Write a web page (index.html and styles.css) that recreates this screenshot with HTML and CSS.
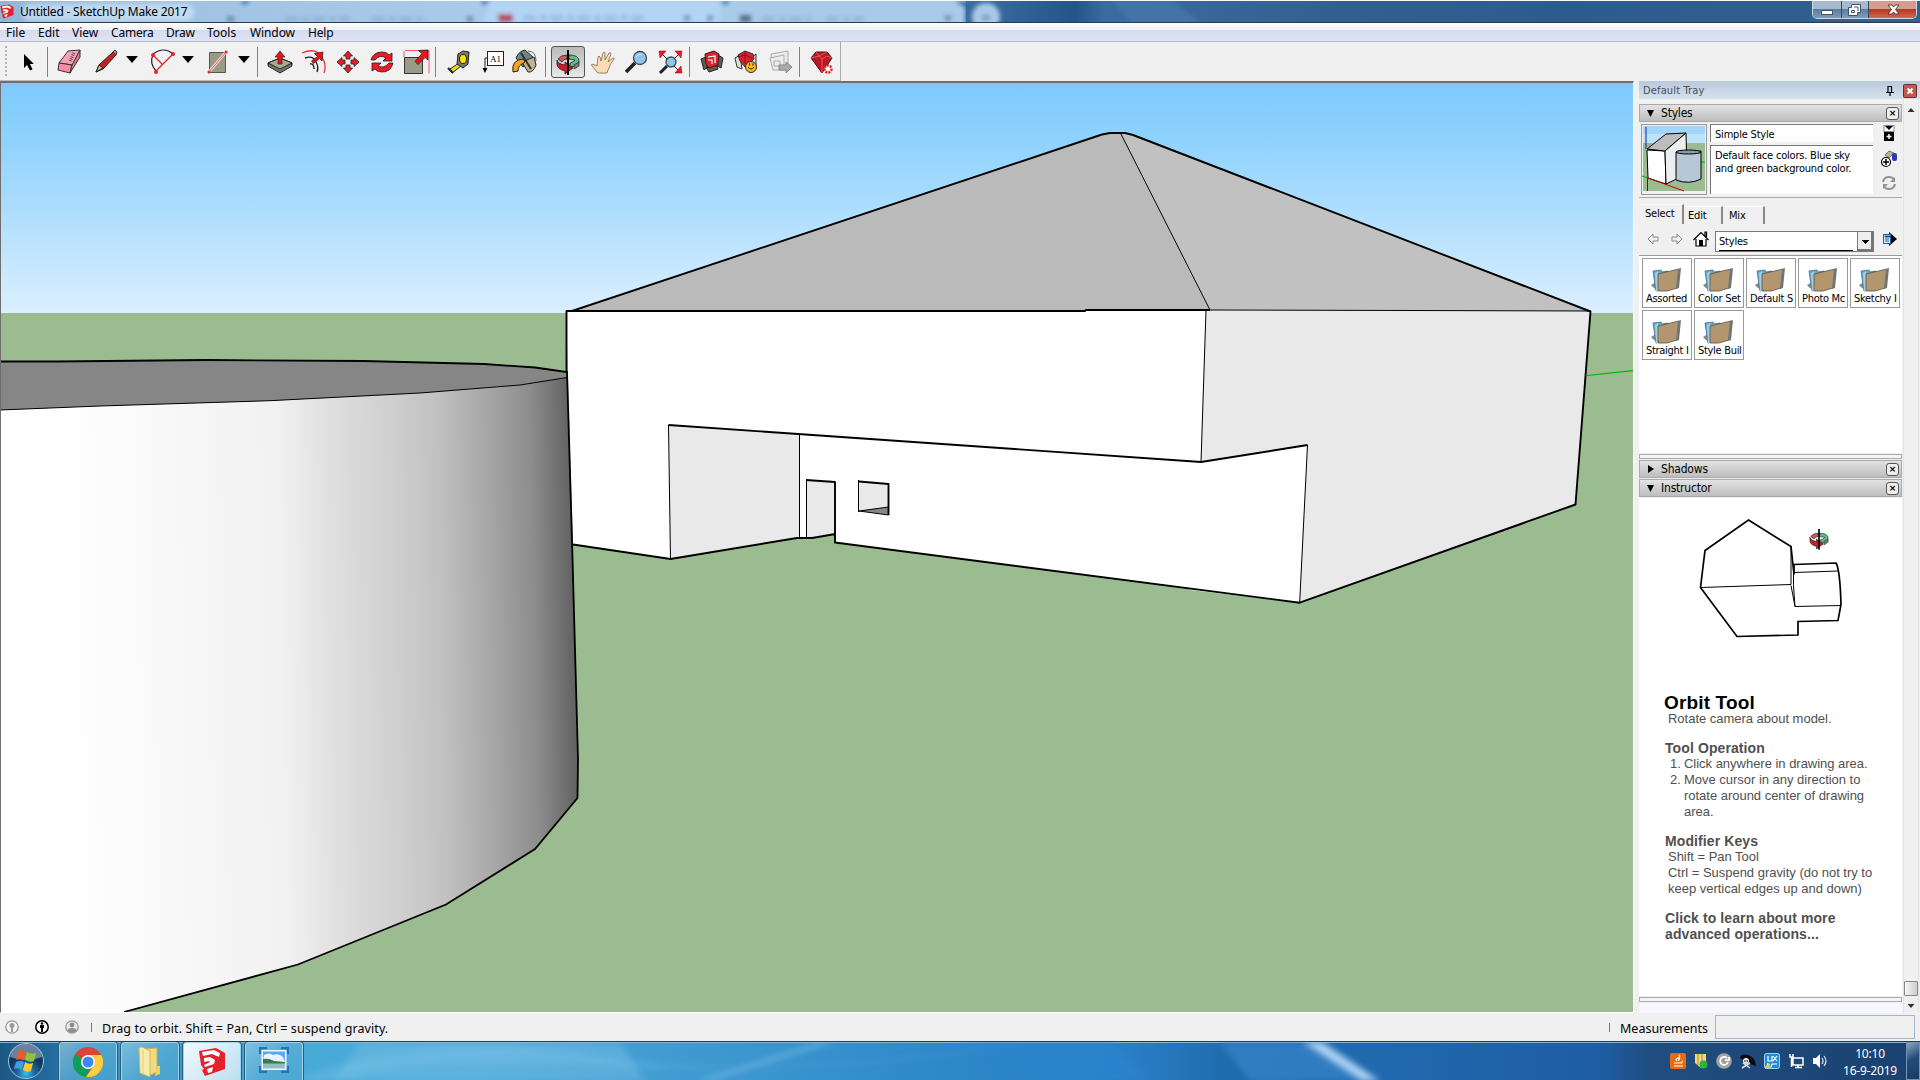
FILE: index.html
```html
<!DOCTYPE html>
<html lang="en">
<head>
<meta charset="utf-8">
<title>Untitled - SketchUp Make 2017</title>
<link rel="stylesheet" href="styles.css">
</head>
<body>
<svg class="defs" width="0" height="0">
  <defs>
    <symbol id="orbit" viewBox="0 0 34 34">
      <path d="M7 14q3-4 9-4v4q-4 0-5 3z" fill="#d2585c" stroke="#222" stroke-width=".8"/>
      <path d="M18 10q10 0 10 6 0 5-9 6v-4q4-1 5-3l-6-1z" fill="#5fbd86" stroke="#222" stroke-width=".8"/>
      <path d="M6 15q1 4 8 5v-3l8 6-8 6v-3q-8-2-8-7z" fill="#c81e28" stroke="#222" stroke-width=".8"/>
      <path d="M23 20l5-3v4l-5 3z" fill="#7b8178" stroke="#222" stroke-width=".7"/>
      <path d="M17 5v25" stroke="#000" stroke-width="2"/>
    </symbol>
    <symbol id="folder" viewBox="0 0 48 26">
      <path d="M8 19l8-5v11q-6-3-8-6z" fill="#888"/>
      <path d="M10 5l8-1 1 2 6-1v6L14 25 13 25z" fill="#68aacb" stroke="#39718e" stroke-width=".8"/>
      <path d="M12 7l3-2 1 20h-3z" fill="#9dd0e8"/>
      <path d="M15 8l21-5-2 19-10 3H15z" fill="#b4966e" stroke="#55504a" stroke-width=".8"/>
      <path d="M35 3l3-1-2 20-3 1z" fill="#6b7777"/>
    </symbol>
    <symbol id="logo" viewBox="0 0 28 28">
      <path d="M1 3l17-3 9 5v16L7 28 4 22l2-1-3-4z" fill="#e5212a"/>
      <path d="M4 4l12-2 6 3-1 4-7-3-9 2zM6 10l6-1 5 3-1 4-9 3-1-2 6-3-1-1-5 1zM9 21l6-2-1 5-4 1z" fill="#fff"/>
    </symbol>
  </defs>
</svg>

<header class="titlebar">
  <div class="tabs-behind">
    <svg width="1920" height="22" viewBox="0 0 1920 22">
      <defs><linearGradient id="tb"><stop offset="0" stop-color="#8fb5d9"/><stop offset=".1" stop-color="#9fc1e1"/><stop offset=".5" stop-color="#a9cbea"/></linearGradient>
      <linearGradient id="sky2"><stop offset="0" stop-color="#4274a6"/><stop offset=".13" stop-color="#245589"/><stop offset=".16" stop-color="#3b6c9f"/><stop offset=".4" stop-color="#335f90"/><stop offset=".62" stop-color="#2c5c8e"/><stop offset="1" stop-color="#315f8f"/></linearGradient>
      <filter id="bl" x="-10%" y="-50%" width="120%" height="200%"><feGaussianBlur stdDeviation="2"/></filter></defs>
      <rect x="950" width="970" height="22" fill="url(#sky2)"/>
      <path d="M1112 0h60l30 22h-70z" fill="#4b7bad" opacity=".6" filter="url(#bl)"/>
      <rect width="966" height="22" fill="url(#tb)"/>
      <path d="M955 0h20v22h-10V6z" fill="#3b6b9e" filter="url(#bl)"/>
      <g filter="url(#bl)">
        <path d="M490 0h230v22H483z" fill="#b2d4f5"/>
        <path d="M240 0h10l-5 4zM480 0h10l-5 4zM720 0h10l-5 4z" fill="#2d5c91"/>
        <circle cx="986" cy="16" r="14" fill="#a8c9e8"/><rect x="982" y="14" width="8" height="5" fill="#7b97b3"/>
        <rect x="498" y="13" width="15" height="8" fill="#b2485e"/>
        <rect x="740" y="14" width="11" height="7" fill="#5a7088"/>
        <path d="M285 18h65M372 18h55M523 17h125M762 18h50M826 18h38" stroke="#6688aa" stroke-width="5" stroke-dasharray="13 4 7 3" opacity=".3"/>
        <path d="M227 18h7M467 18h6M684 17h6M707 17h6M945 17h6" stroke="#3e5874" stroke-width="5" opacity=".6"/>
      </g>
      <rect x="22" y="3" width="172" height="17" rx="8" fill="#d9eaf8" opacity=".6" filter="url(#bl)"/>
    </svg>
  </div>
  <svg class="app-logo" width="14" height="15"><use href="#logo" width="14" height="15"/></svg>
  <span class="app-title">Untitled - SketchUp Make 2017</span>
  <div class="win-buttons">
    <div class="wb"><svg width="28" height="18"><rect x="8.500" y="9.500" width="11" height="4" fill="#fff" stroke="#44546a"/></svg></div>
    <div class="wb"><svg width="26" height="18"><path d="M9.500 3.500h9v8h-3v3h-9v-8h3z" fill="#fff" stroke="#44546a"/><path d="M9.500 9.500h3v2h-3zM12 6h4v4" fill="none" stroke="#44546a"/></svg></div>
    <div class="wb wb-close"><svg width="47" height="18"><path d="M19 4h4l1.500 2L26 4h4l-3.500 4.500L30 13h-4l-1.500-2-1.500 2h-4l3.500-4.500z" fill="#fff" stroke="#533" stroke-width=".9"/></svg></div>
  </div>
</header>

<nav class="menubar"><span class="m1">File</span><span class="m2">Edit</span><span class="m3">View</span><span class="m4">Camera</span><span class="m5">Draw</span><span class="m6">Tools</span><span class="m7">Window</span><span class="m8">Help</span></nav>

<div class="toolbar">
  <div class="tools">
    <i class="grip"></i>
    <svg class="ic" viewBox="0 0 34 34"><path d="M13 9v14l3-3 3 5.500 2.500-1.200L19 19h4z" fill="#000"/></svg>
    <i class="sep"></i>
    <svg class="ic g3" viewBox="0 0 34 34"><path d="M16 6l12-1-7 15-14-2z" fill="#f3a3b7" stroke="#333"/><path d="M7 18l13 2-2 8-12-3z" fill="#fb8ca5" stroke="#333"/><path d="M28 5v7l-10 16 2-8z" fill="#d77990" stroke="#333"/><path d="M22 8l-4 8" stroke="#6d4650" stroke-width="3" stroke-dasharray="1 1"/></svg>
    <svg class="ic g3" viewBox="0 0 34 34"><path d="M7 27l3-7L24 7l3 3-13 14z" fill="#c91f1f" stroke="#222"/><path d="M7 27l3-7 4 3z" fill="#d2bd86" stroke="#222"/><path d="M24 7l2-2 2 2-1 3z" fill="#c98c8c" stroke="#333"/></svg>
    <i class="dd"></i>
    <svg class="ic g4" viewBox="0 0 34 34"><path d="M8 9Q19 1 28 9M8 10Q4 18 11 26" fill="none" stroke="#222" stroke-width="1.200"/><path d="M28 9L11 26M8 10l9 9" stroke="#e31b23" stroke-width="1.200"/><circle cx="8" cy="10" r="2" fill="#f01c24"/><circle cx="28" cy="9" r="2" fill="#f01c24"/><circle cx="11" cy="27" r="2" fill="#f01c24"/></svg>
    <i class="dd"></i>
    <svg class="ic g4" viewBox="0 0 34 34"><path d="M8.500 7.500h16v20h-16z" fill="#9a9a86" stroke="#55554c"/><path d="M8 27L25 7" stroke="#fff" stroke-width="2.500"/><path d="M8 27L25 7" stroke="#ed3237"/><circle cx="8" cy="27" r="1.500" fill="#f01c24"/><circle cx="25" cy="7" r="1.500" fill="#f01c24"/></svg>
    <i class="dd"></i>
    <i class="sep s2"></i>
    <svg class="ic g4" viewBox="0 0 34 34"><path d="M5 18l12-5 12 5v3l-12 7-12-7z" fill="#77776a" stroke="#222"/><path d="M5 18l12-5 12 5-12 6z" fill="#a9a994" stroke="#222"/><path d="M15 19v-7h-3l5-6 5 6h-3v7z" fill="#e8151c" stroke="#222" stroke-width=".7"/></svg>
    <svg class="ic" viewBox="0 0 34 34"><path d="M5 8q14-6 20 4 5 8 2 16" fill="none" stroke="#e93238" stroke-width="1.300"/><path d="M8 13q8-3 11 4 3 5 1 10M13 19q4-1 4 5" fill="none" stroke="#222" stroke-width="1.400"/><path d="M26 7l-1 9-2.500-2.500-6 5-2-2.500 6-4.500-3-3z" fill="#e8151c" stroke="#222" stroke-width=".7"/></svg>
    <svg class="ic" viewBox="0 0 34 34"><path d="M17 6l4.500 5H19v3h-4v-3h-2.500zM17 28l4.500-5H19v-3h-4v3h-2.500zM6 17l5-4.500V15h3v4h-3v2.500zM28 17l-5-4.500V15h-3v4h3v2.500z" fill="#ed1c24" stroke="#222" stroke-width=".8"/></svg>
    <svg class="ic" viewBox="0 0 34 34"><path d="M6 15q2-8 11-8 5 0 7 3l3-2v8h-9l3-3q-6-4-11 2z" fill="#ed1c24" stroke="#222" stroke-width=".8"/><path d="M28 18q-2 9-11 9-5 0-7-3l-3 2v-8h9l-3 3q6 3 11-3z" fill="#ed1c24" stroke="#222" stroke-width=".8"/></svg>
    <svg class="ic" viewBox="0 0 34 34"><path d="M6 5.500h24v23" fill="none" stroke="#f25a60"/><path d="M5.500 12.500h18v16h-18z" fill="#9a9a86" stroke="#333"/><path d="M5 12V6" stroke="#f25a60"/><path d="M29 5v10l-3-2.500-7 7-3-3 7-8-3.500-3z" fill="#e8151c" stroke="#222" stroke-width=".8"/></svg>
    <i class="sep"></i>
    <svg class="ic g5" viewBox="0 0 34 34"><path d="M8 24l9-6 2 3-9 7z" fill="#e9d821" stroke="#222"/><path d="M6 23l5 5" stroke="#222" stroke-width="2"/><path d="M16 9l5-3 6 1-1 12-5 4-6-4z" fill="#77776a" stroke="#222"/><ellipse cx="21" cy="14" rx="3.500" ry="4.500" fill="#f7e600" stroke="#222"/></svg>
    <svg class="ic" viewBox="0 0 34 34"><rect x="11.500" y="6.500" width="16" height="14" fill="#fff" stroke="#222"/><path d="M11 13H9v11" fill="none" stroke="#222"/><path d="M6.500 23h5L9 28z"/><text class="a1" x="14" y="17">A1</text></svg>
    <svg class="ic gm" viewBox="0 0 34 34"><path d="M8 13q3-7 9-8l9 8-11 9z" fill="#6f8788" stroke="#222"/><path d="M14 17l12-5 2 8q-3 8-8 7z" fill="#beb58f" stroke="#222"/><path d="M13 8l10 16" stroke="#333" stroke-width="2"/><path d="M5 27q-2-12 10-13 3 2 1 4-6 2-6 8z" fill="#f5a51b" stroke="#222"/><path d="M20 6q8 0 8 10" fill="none" stroke="#666"/></svg>
    <i class="sep s3"></i>
    <span class="pressed"><svg class="ic"><use href="#orbit"/></svg></span>
    <svg class="ic" viewBox="0 0 34 34"><path d="M13 28L7 21q-2-3 3-1l2 1 1-9q1-2 2 0l1 4 2-8q2-2 2 0v7l4-7q2-1 2 1l-3 8 5-4q2 0 1 1-4 5-6 11l-1 3z" fill="#fbdcb6" stroke="#7a6a50" stroke-width=".8"/></svg>
    <svg class="ic" viewBox="0 0 34 34"><path d="M7 27l9-9" stroke="#222" stroke-width="3.500"/><circle cx="21" cy="13" r="6.500" fill="#8ec5e8" stroke="#3c4a55" stroke-width="1.300"/><path d="M17 12q2-4 6-3" stroke="#d8efff" fill="none"/></svg>
    <svg class="ic" viewBox="0 0 34 34"><path d="M7 28l7-7" stroke="#222" stroke-width="3"/><path d="M9 9l16 16M26 9l-9 9" stroke="#222"/><circle cx="18" cy="17" r="5" fill="#8ec5e8" stroke="#3c4a55" stroke-width="1.300"/><path d="M6 6h7l-6 7zM29 6h-7l6 7zM29 28h-7l6-7z" fill="#ed1c24" stroke="#801" stroke-width=".5"/></svg>
    <i class="sep s0"></i>
    <svg class="ic g4" viewBox="0 0 34 34"><path d="M6 14l5-2 2 10-4 3zM28 13l-5-3-2 10 5 3zM11 22l11-2 1 4-9 3z" fill="#655d54" stroke="#222"/><path d="M10 9l9-3 5 3-1 11-9 3-3-4z" fill="#e0202a" stroke="#222"/><path d="M13 12l7-1v7M13 15h4v4" fill="none" stroke="#fff" stroke-width="1.200"/></svg>
    <svg class="ic" viewBox="0 0 34 34"><path d="M6 13l5-3 2 14-5-2zM27 9l-5 4-2 11 7-3z" fill="#ddd" stroke="#333"/><path d="M9 10l7-4 8 3 1 5-9 8-5-6z" fill="#d7222e" stroke="#333"/><path d="M10 12l6-2 7 3M16 7v12" fill="none" stroke="#8d0d18"/><circle cx="22" cy="22" r="5.500" fill="#f8b619" stroke="#333"/><path d="M19 22q3 4 6 0M20.500 18.500v2M24 18.500v2" fill="none" stroke="#222"/></svg>
    <svg class="ic" viewBox="0 0 34 34"><g fill="#ececec" stroke="#aaa"><path d="M8 9l17-3v17H10z"/><path d="M7 13l14-3v15H10z"/><path d="M11 16h6v5h-6z"/></g><path d="M16 20h7v-3l6 5-6 6v-3h-7z" fill="#aaa" stroke="#888"/></svg>
    <i class="sep s0"></i>
    <svg class="ic gr" viewBox="0 0 34 34"><path d="M6 13l5-6h11l5 6-10 15z" fill="#b91824" stroke="#411"/><path d="M6 13l8-2 3 3 5-3 5 2M11 7l3 4 8-4M17 14v14" fill="none" stroke="#e9545e"/><circle cx="23" cy="24" r="3.500" fill="#fff" stroke="#e2202a" stroke-width="2.500" stroke-dasharray="2 1"/></svg>
  </div>
</div>

<main class="work">
  <div class="viewport">
    <svg width="1633" height="929" viewBox="1 83 1633 929" preserveAspectRatio="none">
      <defs>
        <linearGradient id="sky" x2="0" y2="1"><stop offset="0" stop-color="#7dc9fe"/><stop offset=".25" stop-color="#8fd2fd"/><stop offset="1" stop-color="#dbefff"/></linearGradient>
        <linearGradient id="cyl" gradientUnits="userSpaceOnUse" x1="0" y1="600" x2="575" y2="588"><stop offset=".1" stop-color="#fff"/><stop offset=".3" stop-color="#f8f8f8"/><stop offset=".49" stop-color="#f1f1f1"/><stop offset=".53" stop-color="#e9e9e9"/><stop offset=".58" stop-color="#dfdfdf"/><stop offset=".7" stop-color="#cdcdcd"/><stop offset=".77" stop-color="#c0c0c0"/><stop offset=".86" stop-color="#a4a4a4"/><stop offset=".93" stop-color="#8c8c8c"/><stop offset="1" stop-color="#606060"/></linearGradient>
      </defs>
      <rect x="1" y="83" width="1633" height="230" fill="url(#sky)"/>
      <rect x="1" y="313" width="1633" height="699" fill="#9bbc91"/>
      <path d="M1587 375.500L1634 370.500" stroke="#00b400" stroke-width="1.200"/>
      <path d="M566 311L1206 310 1301 311 1299.700 602.700 835.500 542.500V534L812 538H797L670.500 559 573 544.500z" fill="#fefefe"/>
      <path d="M576 311L1102 134 1110 133H1121L1210 310z" fill="#bababa"/>
      <path d="M1121 133L1133 135 1590.500 311 1210 310z" fill="#c1c1c1"/>
      <path d="M1206 310L1590.500 311.500 1575.500 504.500 1299.700 602.700 1307.500 445 1201 462z" fill="#e9e9e9"/>
      <path d="M1299.700 602.700L1307.500 445 1201 462 1190 590z" fill="#fefefe"/>
      <path d="M668.500 425L799.500 434V538L670.500 559zM806 480L835.500 482V534L806 538zM858.500 481L888.500 484V514L859 511z" fill="#e9e9e9"/>
      <path d="M859 511L888.500 507V515z" fill="#868686" stroke="#000"/>
      <g fill="none" stroke="#000" stroke-width="1">
        <path d="M1121 134L1210 310L1413 310.500L1590 311M1206 310L1201 462M1307.500 445L1299.700 602M668.500 425L670.500 560M799.500 434V538M806.500 480V538M858.500 480V512"/>
      </g>
      <g fill="none" stroke="#000" stroke-width="1.900" stroke-linejoin="round">
        <path d="M573 544.500L670.500 559 797 538H812L835.500 534M668.500 425L1201 462 1307.500 445M806 480L835 482V542.500L1299.700 602.700 1575.500 504.500 1590.500 311.500 1133 135 1125 133H1110L1102 134.500 572 311M566.500 372V311H1085L1086 310H1210M859 481.500L888.500 484V515"/>
      </g>
      <path d="M0 410L100 406 270 400.700 420 393 500 387.500 567 377.500 572 540 578 759 577.500 798 535 849 446 904.500 298 964.500 124 1012H0z" fill="url(#cyl)"/>
      <path d="M0 361.500H57L207 360 363 361 484 364 535 367.500 567 372V377.500L520 385 420 393 270 400.700 100 406 0 410z" fill="#868686"/>
      <path d="M0 410L100 406 270 400.700 420 393 520 385 567 377.500" fill="none" stroke="#000"/>
      <path d="M0 361.500H57L207 360 363 361 484 364 535 367.500 567 372 568 405 572 540 578 759 577.500 798 535 849 446 904.500 298 964.500 124 1012" fill="none" stroke="#000" stroke-width="1.800"/>
    </svg>
  </div>

  <aside class="tray">
    <div class="tray-head"><span>Default Tray</span>
      <svg class="pin" width="8" height="10"><path d="M2 0v6M5.500 0v6M2 .5h4M0 6.500h8M4 7v3" stroke="#000" stroke-width="1.200" fill="none"/></svg>
      <svg class="tray-x" width="14" height="14"><rect x=".5" y=".5" width="13" height="13" rx="1" fill="#c25a51" stroke="#6b2a26"/><path d="M4.500 4.500l5 5M9.500 4.500l-5 5" stroke="#fff" stroke-width="2"/></svg>
    </div>
    <div class="tray-body">
      <div class="panels">
        <div class="phead first"><i class="tri down"></i><span>Styles</span><i class="px">×</i></div>
        <div class="style-info">
          <svg class="preview" width="66" height="71" viewBox="0 0 66 71"><rect x=".5" y=".5" width="65" height="70" fill="#f0f0f0" stroke="#999"/><rect x="2" y="2" width="62" height="18" fill="#bde3fa"/><rect x="2" y="2" width="62" height="8" fill="#a2d7fb"/><rect x="2" y="19" width="62" height="48" fill="#9bbc91"/><path d="M5 3v22M6.500 54v13" stroke="#1b1bb4"/><path d="M1 52l6 2M60 38h4" stroke="#00b400"/><path d="M6 26L24 27 25 60 7 54z" fill="#fff" stroke="#000"/><path d="M6 25L25 10 45 9 24 27z" fill="#bdbdbd" stroke="#000"/><path d="M24 27L45 9 46 50 25 60z" fill="#eee" stroke="#000"/><path d="M35 28v28q13 5 25-1V27q-12 3-25 1z" fill="#b6c8d6" stroke="#000"/><ellipse cx="47.500" cy="28" rx="12.500" ry="2" fill="#8999a5" stroke="#000"/><path d="M7 54l36 13" stroke="#c00"/></svg>
          <div class="fields"><div class="fld name">Simple Style</div><div class="fld desc">Default face colors. Blue sky<br>and green background color.</div></div>
          <div class="side-icons">
            <svg width="12" height="17"><rect x="1" y=".5" width="10" height="6" fill="#fff" stroke="#888"/><path d="M2 1h8L6 5zM1 7h10v9H1z"/><path d="M6 9v5M3.500 11.500h5" stroke="#fff" stroke-width="1.500"/></svg>
            <svg width="18" height="18"><path d="M5 5l4-4 5 2-5 5z" fill="#bdb38b" stroke="#777"/><rect x="12" y="3" width="5" height="8" rx="2" fill="#3038b8"/><circle cx="6" cy="12" r="4.500" fill="#fff" stroke="#000" stroke-width="1.200"/><path d="M6 9v6M3 12h6" stroke="#000" stroke-width="1.500"/></svg>
            <svg width="14" height="14"><path d="M1 6q1-5 6-5 4 0 5 3M13 8q-1 5-6 5-4 0-5-3" fill="none" stroke="#929292" stroke-width="2"/><path d="M13 1v5H8zM1 13V8h5z" fill="#929292"/></svg>
          </div>
        </div>
        <div class="tabs"><span class="t1">Select</span><span class="t2">Edit</span><span class="t3">Mix</span></div>
        <div class="navrow">
          <svg width="12" height="12"><path d="M1 6l5-5v3h5v4H6v3z" fill="#f0f0f0" stroke="#8a8a8a"/></svg>
          <svg class="fwd" width="12" height="12"><path d="M11 6L6 1v3H1v4h5v3z" fill="#f0f0f0" stroke="#8a8a8a"/></svg>
          <svg class="home" width="16" height="16"><path d="M3 8v7h10V8M0.500 9L8 1.500 15.500 9M12 5V1h1.500v5" fill="#fff" stroke="#000" stroke-width="1.200"/><path d="M6 9h4v6H6z"/></svg>
          <div class="combo"><span>Styles</span><i class="cbtn"></i></div>
          <svg class="detail" width="14" height="14"><path d="M6 0l8 7-8 7z"/><rect x=".5" y="2.500" width="7" height="9" fill="#dbeafc" stroke="#225fa8"/><path d="M2 4h5v1H2zM2 7h4M2 9h4" stroke="#225fa8"/></svg>
        </div>
        <div class="folders">
          <div class="fold"><svg width="48" height="26"><use href="#folder"/></svg><span>Assorted</span></div>
          <div class="fold"><svg width="48" height="26"><use href="#folder"/></svg><span>Color Set</span></div>
          <div class="fold"><svg width="48" height="26"><use href="#folder"/></svg><span>Default S</span></div>
          <div class="fold"><svg width="48" height="26"><use href="#folder"/></svg><span>Photo Mc</span></div>
          <div class="fold"><svg width="48" height="26"><use href="#folder"/></svg><span>Sketchy I</span></div>
          <div class="fold"><svg width="48" height="26"><use href="#folder"/></svg><span>Straight I</span></div>
          <div class="fold"><svg width="48" height="26"><use href="#folder"/></svg><span>Style Buil</span></div>
        </div>
        <div class="splitter"></div>
        <div class="phead"><i class="tri right"></i><span>Shadows</span><i class="px">×</i></div>
        <div class="phead"><i class="tri down"></i><span>Instructor</span><i class="px">×</i></div>
        <div class="instructor">
          <svg class="sketch" width="263" height="195" viewBox="0 0 263 195"><g transform="translate(-9 1.500)" fill="none" stroke="#000"><path d="M118.500 20.500L161 47 164 75V65L206 63.500Q210 70 211 105L208 121 168 122V135.500L107 137 70.500 88 75 51z" stroke-width="1.700"/><path d="M71 88L161 85V47M164 73L208 71.500M163.500 67V86L165 107 211 106M161 86l4 21" stroke-width="1"/></g><use href="#orbit" x="166" y="26" width="28" height="30"/></svg>
          <h2>Orbit Tool</h2>
          <p class="r">Rotate camera about model.</p>
          <h3>Tool Operation</h3>
          <div class="li"><b>1.</b><span>Click anywhere in drawing area.</span></div>
          <div class="li"><b>2.</b><span>Move cursor in any direction to<br>rotate around center of drawing<br>area.</span></div>
          <h3>Modifier Keys</h3>
          <p>Shift = Pan Tool<br>Ctrl = Suspend gravity (do not try to<br>keep vertical edges up and down)</p>
          <h3 class="more">Click to learn about more<br>advanced operations...</h3>
        </div>
        <div class="splitter"></div>
        <div class="tail"></div>
      </div>
      <div class="scroll"><i class="up"></i><i class="thumb"></i><i class="dn"></i></div>
    </div>
  </aside>
</main>

<footer class="status">
  <svg class="st" width="14" height="14"><circle cx="7" cy="7" r="6.200" fill="#f4f4f4" stroke="#999" stroke-width="1.300"/><circle cx="7" cy="5.500" r="2.500" fill="#999"/><path d="M6 6h2v6H6z" fill="#999"/></svg>
  <svg class="st" width="14" height="14"><circle cx="7" cy="7" r="6.200" fill="#fff" stroke="#000" stroke-width="1.500"/><circle cx="7" cy="3.500" r="1.300"/><path d="M5 5h4v3H8v4H6V8H5z"/></svg>
  <svg class="st" width="14" height="14"><circle cx="7" cy="7" r="6.200" fill="#e9e9e9" stroke="#999" stroke-width="1.300"/><circle cx="7" cy="5" r="2.400" fill="#8d8d8d"/><path d="M2.500 11q0-3 4.500-3t4.500 3q-4.500 4-9 0z" fill="#8d8d8d"/></svg>
  <i class="bar b1"></i><span class="hint">Drag to orbit. Shift = Pan, Ctrl = suspend gravity.</span>
  <i class="bar b2"></i><span class="meas">Measurements</span><div class="mbox"></div>
</footer>

<div class="taskbar">
  <svg class="aero" width="1920" height="39" viewBox="0 0 1920 39" preserveAspectRatio="none">
    <defs><filter id="b2" x="-20%" y="-20%" width="140%" height="140%"><feGaussianBlur stdDeviation="3"/></filter></defs>
    <g filter="url(#b2)"><path d="M360 0h260l25 39H335z" fill="#82c5e6" opacity=".35"/><path d="M290 39Q440-15 600 14T1040 0Q800 34 600 24T340 39z" fill="#8dcbee" opacity=".25"/><path d="M820 0h14L710 39h-14z" fill="#8ccaf0" opacity=".5"/><path d="M960 0h150l40 39h-90z" fill="#2d86cf" opacity=".5"/><path d="M1220 0h80l65 39H1250z" fill="#4090d4" opacity=".5"/></g>
    <path d="M1302 0h20l58 39h-18z" fill="#abd2f6" filter="url(#b2)"/>
  </svg>
  <div class="start"><svg width="40" height="38" viewBox="0 0 40 38"><defs><radialGradient id="orb" cx=".5" cy=".85"><stop offset="0" stop-color="#35c2ee"/><stop offset=".5" stop-color="#1d659d"/><stop offset="1" stop-color="#12365f"/></radialGradient></defs><circle cx="20" cy="19" r="17.500" fill="url(#orb)" stroke="#9cc7df"/><path d="M4 15a16 13 0 0 1 32 0q-15 6-32 0z" fill="#fff" opacity=".38"/><path d="M12 10q4-3 8 0l-2 8q-4-2-8 0z" fill="#f0592a"/><path d="M21 10q5 3 9 1l-2 8q-4 2-9-1z" fill="#8cc63e"/><path d="M10 20q4-2 8 0l-2 8q-4-3-8-1z" fill="#3f9ee0"/><path d="M19 20q4 3 8 1l-2 8q-4 2-8-1z" fill="#fcc72f"/></svg></div>
  <div class="task"><svg width="30" height="30" viewBox="0 0 30 30"><circle cx="15" cy="15" r="15" fill="#db4437"/><path d="M15 15L2 7.500A15 15 0 0 0 13 30l6-11z" fill="#0f9d58"/><path d="M15 8h13.300A15 15 0 0 1 13 30l8-12z" fill="#ffcd40"/><circle cx="15" cy="15" r="7" fill="#fff"/><circle cx="15" cy="15" r="5.500" fill="#4285f4"/></svg></div>
  <div class="task"><svg width="26" height="32" viewBox="0 0 26 32"><path d="M7 3l13-1v24l-9 4z" fill="#f2d983" stroke="#cdae56"/><path d="M2 2l3-1 8 4v26L3 27z" fill="#f9eba9" stroke="#cfb560"/><path d="M6 4v24" stroke="#e6cd7c"/><path d="M20 20h3v8l-5 2z" fill="#f1cf68"/></svg></div>
  <div class="task active"><svg width="28" height="28"><use href="#logo"/></svg></div>
  <div class="task"><svg class="photo" width="30" height="26" viewBox="0 0 30 26"><path d="M1 7V1h7M22 1h7v6M29 19v6h-7M8 25H1v-6" fill="none" stroke="#2471bd" stroke-width="2.500"/><rect x="2.500" y="3" width="25" height="20" fill="#f3f8fc"/><rect x="4" y="4.500" width="22" height="10" fill="#5aa9ea"/><path d="M5 8q5-3 9 0 6-2 10 2l2 5H4z" fill="#e7f4fd"/><path d="M4 12q6-1 11 2l11 1v2H4z" fill="#3c7b48"/><path d="M4 16.500h22v5H4z" fill="#8ac0cc"/></svg></div>
  <div class="systray">
    <svg width="16" height="16"><rect width="16" height="16" rx="2" fill="#ea6a12"/><path d="M4 10h7q2-1 1-2M4 13h9M7 8q-2-2 1-3t1-3M9 8q-1-1 1-3" fill="none" stroke="#fff" stroke-width="1.200"/></svg>
    <svg width="14" height="16"><path d="M1 1h11v13L7 15 1 10z" fill="#f2d77a"/><path d="M4 1v11M8 1v12" stroke="#a98c34"/><circle cx="9.500" cy="11.500" r="4" fill="#27b53c"/></svg>
    <svg width="16" height="16"><circle cx="8" cy="8" r="7.800" fill="#a3a3a3"/><path d="M11 5a4 4 0 1 0 1 4M9 7h4V4" fill="none" stroke="#fff" stroke-width="1.700"/></svg>
    <svg width="16" height="16"><path d="M0 5q1-5 8-3 7 2 8 11l-6-2z" fill="#0a0a0a"/><circle cx="6" cy="8" r="3" fill="#eee"/><path d="M2 15l8-5M10 15l-7-5" stroke="#ddd" stroke-width="1.500"/><circle cx="5" cy="8" r=".8"/><circle cx="7.300" cy="8" r=".8"/></svg>
    <svg width="16" height="16"><rect x=".5" y=".5" width="15" height="15" rx="2" fill="#1d8ddb" stroke="#9cd5f6"/><path d="M4 3v5h4V3M9 3l4 5M13 3L9 8M4 10l-1 4h4l1-3h5" fill="none" stroke="#fff" stroke-width="1.200"/><path d="M1 15l5-4" stroke="#f9cf25" stroke-width="2"/></svg>
    <svg width="16" height="16"><path d="M5 5h10v7H5zM2 1v3h3V1M3.500 4v10M7 14.500h7M10 12v2" fill="none" stroke="#fff" stroke-width="1.500"/></svg>
    <svg width="16" height="16"><path d="M1 5h3l4-4v14l-4-4H1z" fill="#fff"/><path d="M10 5q2 3 0 6M12 3q4 5 0 10" fill="none" stroke="#dfe8f2" stroke-width="1.200"/></svg>
  </div>
  <div class="clock"><span>10:10</span><span>16-9-2019</span></div>
  <div class="showdesk"></div>
</div>
</body>
</html>
```
FILE: styles.css
```css
* { box-sizing: border-box; }
html, body { margin: 0; width: 1920px; height: 1080px; overflow: hidden; }
body { display: flex; flex-direction: column; background: #f0f0f0; color: #000; font: 12px/16px "Noto Sans", "Open Sans", sans-serif; white-space: nowrap; }
svg { display: block; flex: none; }
i, b { font-style: normal; font-weight: normal; }
.defs { position: absolute; }

.titlebar { position: relative; height: 23px; flex: none; display: flex; align-items: center; border-top: 1px solid #fff; border-bottom: 1px solid #2b3a4b; overflow: hidden; }
.tabs-behind { position: absolute; inset: 0; }
.app-logo, .app-title, .win-buttons { position: relative; }
.app-title { margin-left: 6px; letter-spacing: -.2px; }
.win-buttons { display: flex; margin-left: auto; margin-right: 3px; align-self: flex-start; height: 18px; border: 1px solid #c8d8e8; border-top: 0; border-radius: 0 0 5px 5px; overflow: hidden; }
.wb { border-right: 1px solid #30475f; background: linear-gradient(#a5b9cf 0 45%, #597b9f 46%, #7f9dbb); }
.wb-close { border-right: 0; background: linear-gradient(#d99b8e 0 45%, #b5341f 46%, #cf6b50); }

.menubar { height: 19px; flex: none; display: flex; align-items: center; padding: 2px 0 0 6px; border-bottom: 1px solid #b6bccc; background: linear-gradient(#fff, #eef1f8 36%, #d5dbee 38%, #dfe4f4); }
.menubar span { flex: none; }
.m1 { width: 32px; } .m2 { width: 34px; } .m3 { width: 39px; } .m4 { width: 55px; letter-spacing: -.2px; } .m5 { width: 41px; letter-spacing: -.2px; } .m6 { width: 43px; } .m7 { width: 58px; letter-spacing: -.1px; } .m8 { letter-spacing: -.2px; }

.toolbar { height: 39px; flex: none; }
.tools { display: flex; align-items: center; width: 841px; height: 39px; border-right: 1px solid #aaa; border-bottom: 1px solid #bbb; padding: 2px 0 0 5px; background: #f1f1f1; }
.grip { width: 2px; height: 32px; margin-right: 4px; flex: none; background: repeating-linear-gradient(#b0b0b0 0 2px, transparent 2px 4px); }
.ic { width: 34px; height: 34px; }
.sep { width: 4px; height: 30px; flex: none; background: linear-gradient(90deg, transparent 2px, #808080 2px 3px, transparent 3px); }
.s2 { margin-left: 2px; }
.g3 { margin-left: 3px; } .g4 { margin-left: 4px; } .g5 { margin-left: 5px; } .gm { margin-left: -2px; } .gr { margin-left: 4px; }
.dd { width: 18px; height: 34px; flex: none; background: #000; clip-path: polygon(3px 11px, 15px 11px, 9px 18px); }
.a1 { font: 9px "Liberation Serif", serif; }
.s3 { margin-left: 1px; }
.pressed { margin-left: 4px; width: 34px; height: 32px; display: flex; align-items: center; justify-content: center; border: 1px solid #555; border-radius: 3px; background: linear-gradient(#b9b9b9, #e8e8e8); }

.work { flex: none; height: 932px; display: flex; }
.viewport { width: 1634px; border: solid #6e6e6e; border-width: 2px 0 0 1px; border-right: 1px solid #fff; border-bottom: 1px solid #fff; overflow: hidden; }
.tray { width: 281px; margin-left: 5px; display: flex; flex-direction: column; font: 11px/13px "DejaVu Sans Condensed", "DejaVu Sans", sans-serif; letter-spacing: -.2px; }
.tray-head { height: 18px; flex: none; display: flex; align-items: center; padding: 1px 0 0 4px; color: #48505c; background: linear-gradient(#b9c9db, #d6e1ef); }
.tray-head span { letter-spacing: .15px; }
.pin { margin-left: auto; margin-right: 9px; }
.tray-x { margin-right: 3px; }
.tray-body { flex: 1; min-height: 0; display: flex; }
.panels { width: 263px; flex: none; display: flex; flex-direction: column; }
.phead { height: 18px; flex: none; margin-bottom: 1px; display: flex; align-items: center; border: 1px solid #aaa; padding: 0 2px 0 7px; font-size: 12px; background: linear-gradient(#e3e3e3, #bdbdbd); letter-spacing: -.2px; }
.first { margin: 5px 0 2px; }
.phead span { flex: 1; }
.tri { width: 8px; height: 8px; margin-right: 6px; background: #000; }
.down { clip-path: polygon(0 1px, 7px 1px, 3.5px 8px); }
.right { clip-path: polygon(1px 0, 7px 4px, 1px 8px); }
.px { width: 13px; height: 13px; border: 1px solid #555; border-radius: 3px; background: #eee; text-align: center; font: bold 9px/11px "DejaVu Sans", sans-serif; }
.style-info { height: 74px; flex: none; display: flex; padding-left: 2px; border-bottom: 1px solid #aaa; }
.fields { margin-left: 3px; width: 163px; }
.fld { background: #fff; border: solid #777; border-width: 1px 0 0 1px; padding: 3px 4px; }
.name { height: 18px; margin-bottom: 3px; }
.desc { height: 49px; }
.side-icons { flex: 1; display: flex; flex-direction: column; align-items: center; gap: 8px; padding: 1px 0 0 2px; }
.tabs { height: 26px; flex: none; display: flex; align-items: flex-end; }
.tabs span { height: 18px; border-right: 2px solid #888; border-top: 1px solid #fff; padding: 2px 0 0 4px; }
.tabs .t1 { width: 45px; height: 20px; padding-left: 6px; }
.tabs .t2 { width: 39px; } .tabs .t3 { width: 42px; padding-left: 6px; }
.navrow { height: 32px; flex: none; display: flex; align-items: center; padding: 0 0 1px 8px; border-bottom: 1px solid #999; }
.fwd { margin-left: 12px; } .home { margin-left: 10px; }
.combo { width: 159px; height: 21px; margin: 5px 0 0 6px; flex: none; display: flex; align-items: center; justify-content: space-between; background: #fff; border: 1px solid #777; padding-left: 3px; }
.combo span { flex: 1; border-bottom: 1px solid #000; height: 18px; padding-top: 2px; margin-right: 4px; }
.cbtn { width: 16px; height: 19px; border: solid #777; border-width: 0 2px 2px 1px; background: linear-gradient(#000, #000) 4px 8px/7px 1px no-repeat, linear-gradient(#000, #000) 5px 9px/5px 1px no-repeat, linear-gradient(#000, #000) 6px 10px/3px 1px no-repeat, linear-gradient(#000, #000) 7px 11px/1px 1px no-repeat #eee; }
.detail { margin-left: 9px; }
.folders { height: 197px; flex: none; background: #fff; display: grid; grid-template-columns: repeat(5, 50px); grid-auto-rows: 50px; gap: 2px; padding: 2px 3px; align-content: start; }
.fold { border: 1px solid #999; padding-top: 7px; }
.fold span { display: block; margin-left: 3px; letter-spacing: -.3px; }
.splitter { height: 5px; flex: none; border: 1px solid #aaa; margin: 1px 0; background: #f4f4f4; }
.instructor { height: 498px; flex: none; background: #fff; color: #505050; font: 13px/16px "Liberation Sans", Arial, sans-serif; letter-spacing: -.02px; }
.instructor h2 { margin: 0 0 0 25px; height: 18px; font-size: 19px; line-height: 20px; color: #000; letter-spacing: .15px; }
.instructor p { margin: 0 0 0 29px; }
.instructor h3 { margin: 13px 0 0 26px; font-size: 14px; line-height: 16px; letter-spacing: .1px; }
.li { display: flex; padding-left: 31px; }
.li b { width: 14px; }
.tail { flex: 1; background: #f4f7fc; }
.scroll { width: 16px; margin-left: 1px; display: flex; flex-direction: column; align-items: center; border: solid #e4e4e4; border-width: 0 1px; }
.up { width: 7px; height: 4px; margin-top: 9px; background: #333; clip-path: polygon(50% 0, 100% 100%, 0 100%); }
.thumb { width: 14px; height: 15px; margin-top: auto; border: 1px solid #888; border-radius: 1px; background: linear-gradient(90deg, #f6f6f6, #cdcdd2); }
.dn { width: 7px; height: 4px; margin: 8px 0 5px; background: #333; clip-path: polygon(0 0, 100% 0, 50% 100%); }

.status { height: 28px; flex: none; display: flex; align-items: center; padding-left: 5px; }
.st { margin-right: 16px; }
.bar { width: 1px; height: 9px; background: #777; }
.b1 { margin: 0 10px 0 -3px; }
.st:nth-of-type(3) { margin-right: 15px; }
.hint { width: 1507px; font-size: 12.5px; margin: 3px 0 0; letter-spacing: .09px; }
.b2 { margin-right: 10px; }
.meas { width: 95px; font-size: 12.5px; margin-top: 3px; }
.mbox { width: 200px; height: 24px; border: 1px solid #a4b5d0; }

.taskbar { position: relative; height: 39px; flex: none; display: flex; border-top: 1px solid #1c3d54; box-shadow: inset 0 1px #89b6cc; overflow: hidden; background: linear-gradient(90deg, #1c5885 0, #246ea1 55px, #3795c6 120px, #48aad7 310px, #4ca7da 480px, #3c96ce 750px, #2e87c9 950px, #2b80c8 1120px, #1e6bad 1230px, #2068ad 1400px, #1e5da4 1600px, #204d80 1650px, #1a426f 1920px); }
.aero { position: absolute; inset: 0; }
.start, .task, .systray, .clock, .showdesk { position: relative; }
.start { width: 59px; padding-left: 6px; }
.task { width: 58px; height: 39px; margin-right: 4px; display: flex; align-items: center; justify-content: center; border: 1px solid #a5d2e8; border-bottom: 0; border-radius: 3px 3px 0 0; outline: 1px solid #285d7c; background: linear-gradient(135deg, #9fcfe6aa, #5eb0d5aa 50%, #4ca6d0aa); }
.photo { margin-bottom: 4px; }
.active { background: linear-gradient(135deg, #f2f9fc, #b9dff0); }
.systray { margin-left: auto; display: flex; align-items: center; gap: 8px; width: 162px; }
.clock { width: 74px; display: flex; flex-direction: column; align-items: center; justify-content: center; color: #fff; line-height: 17px; letter-spacing: -.2px; padding: 1px 0 0 2px; }
.showdesk { width: 14px; border: 1px solid #7793b1; margin-left: 0; background: linear-gradient(150deg, #8aa4c0, #244c78 45%, #173a63); }
```
